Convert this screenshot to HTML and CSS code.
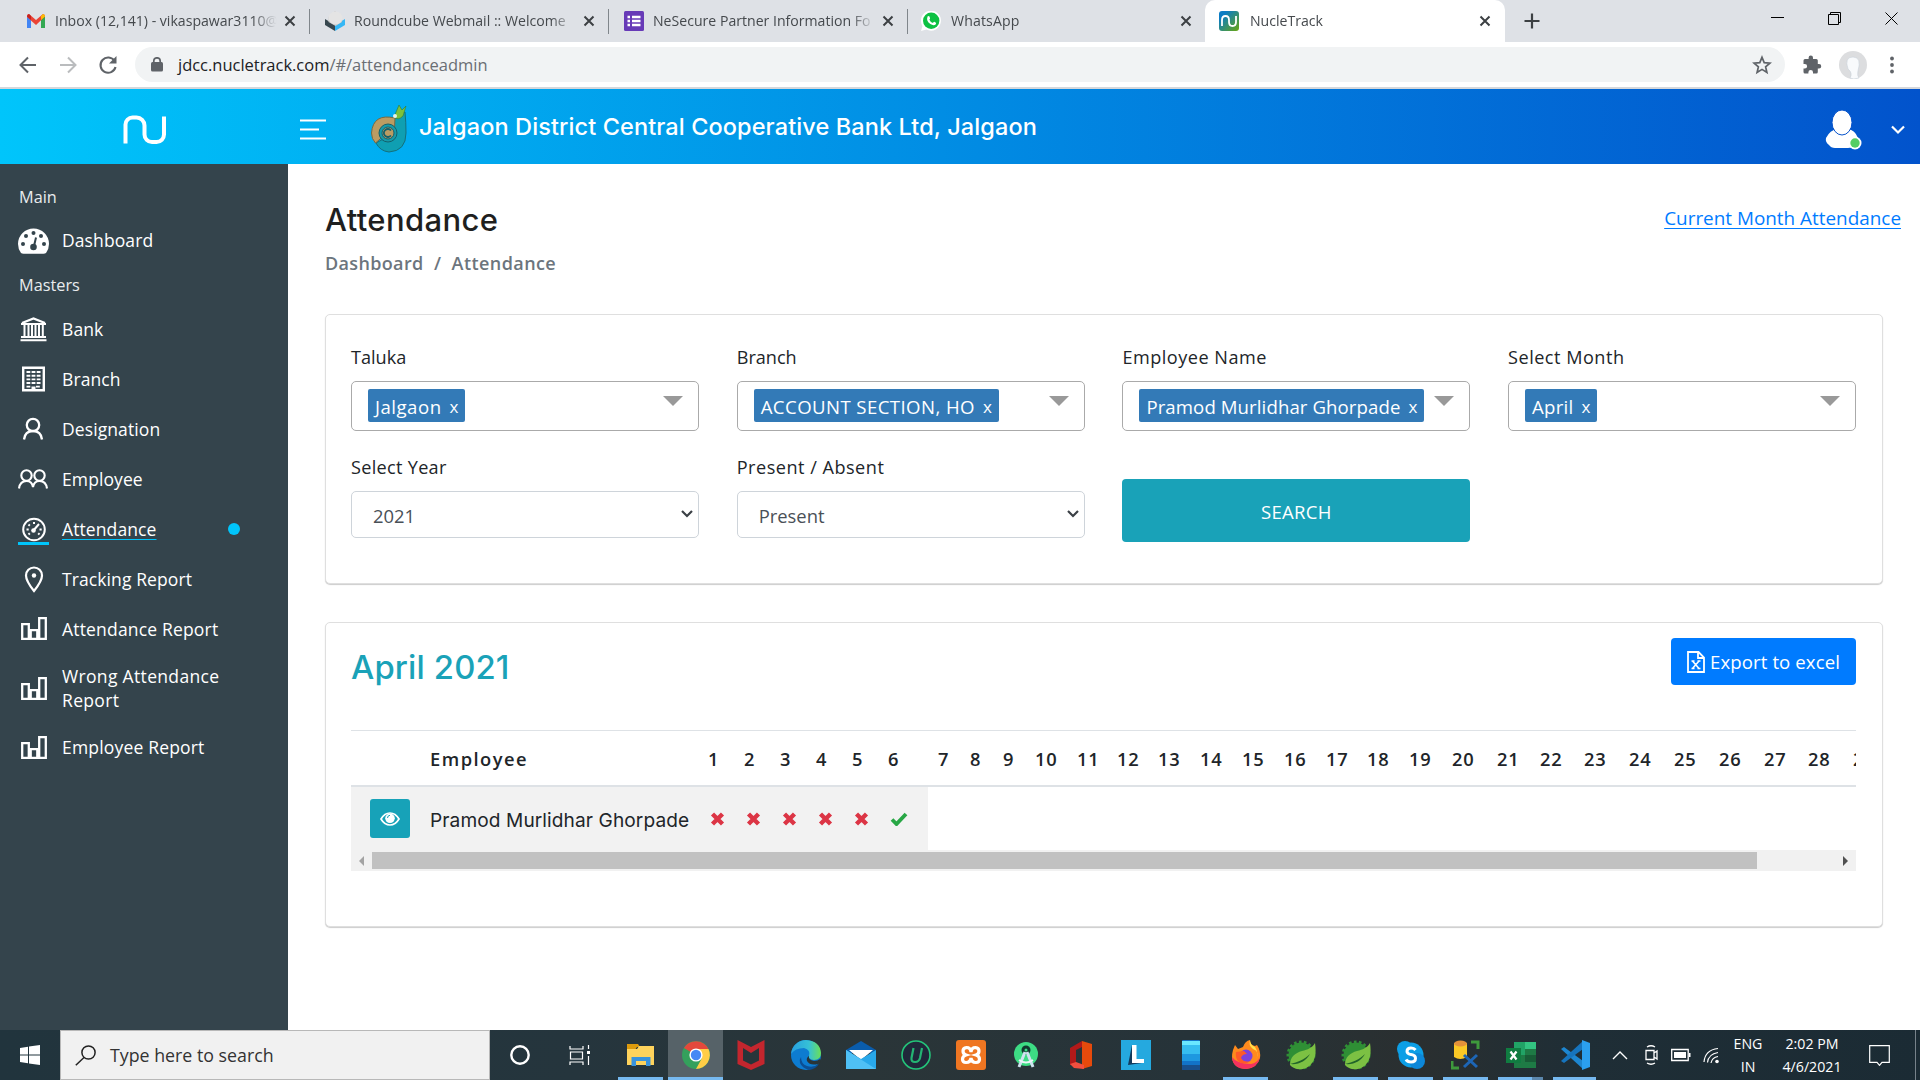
FILE: index.html
```html
<!DOCTYPE html>
<html lang="en">
<head>
<meta charset="utf-8">
<title>NucleTrack</title>
<link rel="stylesheet" href="styles.css">
</head>
<body>
<svg class="defs" width="0" height="0">
  <defs>
    <symbol id="close" viewBox="0 0 12 12"><path d="M1.500 1.500l9 9M10.500 1.500l-9 9" stroke="#3c4043" stroke-width="2" fill="none"/></symbol>
    <symbol id="chart" viewBox="0 0 26 24"><path d="M1.200 7.200h6.600v14.600H1.200zM9.700 13.200h6.600v8.600H9.700zM18.200 1.200h6.600v20.600h-6.600z" fill="none" stroke="#fff" stroke-width="2.300"/></symbol>
    <symbol id="chev" viewBox="0 0 12 8"><path d="M1 1l5 5 5-5" fill="none" stroke="#3b4046" stroke-width="2.200"/></symbol>
    <symbol id="cross" viewBox="0 0 14 14"><path d="M2 2l10 10M12 2L2 12" fill="none" stroke="#dc3545" stroke-width="4.400"/></symbol>
    <symbol id="spring" viewBox="0 0 30 30"><circle cx="15" cy="15" r="12.500" fill="#2f8f35"/><circle cx="15" cy="15" r="13" fill="none" stroke="#2f8f35" stroke-width="3" stroke-dasharray="2.600 2.300"/><path d="M29 3c2 13-1 21-9 25-6 2.500-13 1-16-3 0-8 5-12 12-14 6-1.500 10-3 13-8z" fill="#7cc143"/><path d="M4 24c9 1 16-3 20-10-6 6-12 8-20 10z" fill="#21632a"/></symbol>
  </defs>
</svg>

<div class="tabstrip">
  <div class="tab tab-first">
    <svg class="fav" viewBox="0 0 20 20"><path d="M1 5v12h4V9z" fill="#4285f4"/><path d="M19 5v12h-4V9z" fill="#34a853"/><path d="M1 5.500Q1 3 3 3l7 6 7-6q2 0 2 2.500L10 14 1 6z" fill="#ea4335"/><path d="M15 5l2-2q2 0 2 2.500L15 9z" fill="#fbbc04"/><path d="M1 5.500Q1 3 3 3l2 2v4z" fill="#c5221f"/></svg>
    <span class="tab-title">Inbox (12,141) - vikaspawar3110@</span>
    <svg class="tab-x"><use href="#close"/></svg>
  </div>
  <div class="tab">
    <svg class="fav" viewBox="0 0 20 20"><path d="M0 8l10 6v6L0 14z" fill="#37474f"/><path d="M20 8l-10 6v6l10-6z" fill="#35b7f5"/><path d="M3.500 6L10 0l7 6v5l-6.500 4L3.500 11z" fill="#c9c9c9"/><ellipse cx="10.500" cy="7" rx="7" ry="6.500" fill="#e4e4e4"/></svg>
    <span class="tab-title">Roundcube Webmail :: Welcome</span>
    <svg class="tab-x"><use href="#close"/></svg>
  </div>
  <div class="tab">
    <svg class="fav" viewBox="0 0 20 20"><rect width="20" height="20" rx="1.500" fill="#673ab7"/><path d="M3.500 6h2.500M8 6h8.500M3.500 10h2.500M8 10h8.500M3.500 14h2.500M8 14h8.500" stroke="#fff" stroke-width="2.400"/></svg>
    <span class="tab-title">NeSecure Partner Information Fo</span>
    <svg class="tab-x"><use href="#close"/></svg>
  </div>
  <div class="tab tab-plain">
    <svg class="fav" viewBox="0 0 20 20"><path d="M0 20l1.500-5A10 10 0 1 1 5.500 18.600z" fill="#fff"/><circle cx="10.200" cy="9.800" r="8.200" fill="#0dc143"/><path d="M6.500 5.500q2-1.500 2.500 1.500.3 1-.7 1.500.8 2.500 3.700 3.400.8-1.400 1.800-.9 2.200.8 1 2.200-2 2-5.500-.2-4.300-3-2.800-7.500z" fill="#fff"/></svg>
    <span class="tab-title">WhatsApp</span>
    <svg class="tab-x"><use href="#close"/></svg>
  </div>
  <div class="tab tab-active">
    <svg class="fav" viewBox="0 0 20 20"><defs><linearGradient id="nt" x1="0" y1="0" x2="1" y2="1"><stop offset=".2" stop-color="#0b7cc4"/><stop offset="1" stop-color="#6aa70e"/></linearGradient></defs><rect width="20" height="20" rx="3" fill="url(#nt)"/><path d="M3 15V9q0-4 3.500-4t3.500 4v2q0 4 3.500 4t3.500-4V5" fill="none" stroke="#fff" stroke-width="1.800"/></svg>
    <span class="tab-title">NucleTrack</span>
    <svg class="tab-x"><use href="#close"/></svg>
  </div>
  <svg class="newtab" viewBox="0 0 16 16"><path d="M8 .5v15M.5 8h15" stroke="#3c4043" stroke-width="2.200"/></svg>
  <div class="winctl">
    <svg width="13" height="13"><path d="M0 5.500h13" stroke="#000"/></svg>
    <svg width="13" height="13"><path d="M.5 2.500h10v10H.5zM2.500 2.500v-2h10v10h-2" fill="none" stroke="#000"/></svg>
    <svg width="13" height="13"><path d="M.5.5l12 12M12.500.5l-12 12" stroke="#000"/></svg>
  </div>
</div>

<div class="toolbar">
  <svg class="nav-btn" viewBox="0 0 20 20"><path d="M18 10H3M10 2.500L2.500 10l7.500 7.500" fill="none" stroke="#5f6368" stroke-width="2"/></svg>
  <svg class="nav-btn" viewBox="0 0 20 20"><path d="M2 10h15M10 2.500l7.500 7.500-7.500 7.500" fill="none" stroke="#babcbe" stroke-width="2"/></svg>
  <svg class="nav-btn" viewBox="0 0 20 20"><path d="M16.500 6A7.600 7.600 0 1 0 17.500 12" fill="none" stroke="#5f6368" stroke-width="2.100"/><path d="M18.500 1v7.500H11z" fill="#5f6368"/></svg>
  <div class="omnibox">
    <svg class="lock" viewBox="0 0 12 15"><rect y="5" width="12" height="9.500" rx="1.500" fill="#5f6368"/><path d="M2.800 6V4a3.200 3.200 0 0 1 6.400 0v2" fill="none" stroke="#5f6368" stroke-width="1.700"/></svg>
    <span class="url">jdcc.nucletrack.com<span class="path">/#/attendanceadmin</span></span>
    <svg class="star" viewBox="0 0 20 20"><path d="M10 2.300l2.200 5.300 5.700.5-4.300 3.700 1.300 5.600-4.900-3-4.900 3 1.300-5.600L2.100 8.100l5.700-.5z" fill="none" stroke="#5f6368" stroke-width="1.700"/></svg>
  </div>
  <svg class="puzzle" viewBox="0 0 20 20"><path d="M17 9h-1.200V5.500q0-1.500-1.500-1.500H11V2.800a2.200 2.200 0 0 0-4.400 0V4H3Q1.500 4 1.500 5.500v3.400h1.300a2.300 2.300 0 0 1 0 4.600H1.500V17Q1.500 18.500 3 18.500h3.400v-1.300a2.300 2.300 0 0 1 4.600 0v1.300h3.300q1.500 0 1.500-1.500v-3.500H17A2.200 2.200 0 0 0 17 9z" fill="#5f6368"/></svg>
  <svg class="avatar" viewBox="0 0 28 28"><circle cx="14" cy="14" r="14" fill="#dcdddf"/><path d="M9 18Q5 6 14 6t5 14q-1 5 1 7-6 2-9 0 3-5-2-9z" fill="#f8fafc" stroke="#c7d0d8" stroke-width=".6"/></svg>
  <svg class="dots" viewBox="0 0 4 18"><g fill="#5f6368"><circle cx="2" cy="2.500" r="1.900"/><circle cx="2" cy="9" r="1.900"/><circle cx="2" cy="15.500" r="1.900"/></g></svg>
</div>

<header class="topbar">
  <div class="brand"><svg width="44" height="30" viewBox="0 0 44 30"><path d="M2.500 28.500V9.500a7 7 0 0 1 7-7h4a8 8 0 0 1 8 8v9a7.500 7.500 0 0 0 7.500 7.500h4.500a7.500 7.500 0 0 0 7.500-7.500V1.500" fill="none" stroke="#fff" stroke-width="4"/></svg></div>
  <svg class="burger" viewBox="0 0 26 21"><path d="M0 1.500h26M0 10.500h19M0 19.500h26" stroke="#fff" stroke-width="2.200"/></svg>
  <svg class="bank-logo" viewBox="0 0 38 48"><path d="M26 9l9-2q1 10 1 21 0 18-17 19-9-1-13-9l11-6z" fill="#0f9fb2" stroke="#14707c"/><path d="M25 13Q3 8 1.500 28q0 6 4 10l8-7q-1-7 5-9l6 1z" fill="#bb9c63" stroke="#7b693f"/><circle cx="18" cy="28" r="9" fill="#169aa9" stroke="#14606b"/><circle cx="18" cy="28" r="6" fill="#bb9c63" stroke="#14606b"/><path d="M21 25.500a4 4 0 1 0 0 5" fill="none" stroke="#14606b" stroke-width="1.800"/><path d="M24 12l5-12 3 5 4-4-3 10q-5 5-9 1z" fill="#7cc13c" stroke="#317a35" stroke-width=".6"/><circle cx="25" cy="11" r="2" fill="#e8f4ea"/></svg>
  <h1 class="bank-name">Jalgaon District Central Cooperative Bank Ltd, Jalgaon</h1>
  <svg class="user" viewBox="0 0 38 40"><path d="M1 28Q5 20 12 19h11q7 1 10 9 1 5-4 8-2 2-6 2H10q-4 0-6-3-4-3-3-7z" fill="#fff"/><ellipse cx="17" cy="12.500" rx="10" ry="12.500" fill="#fff" stroke="#0753cb"/><circle cx="30" cy="33" r="6.500" fill="#fff"/><circle cx="30" cy="33" r="4.700" fill="#55ce63"/></svg>
  <svg class="user-chev" viewBox="0 0 14 10"><path d="M1 1.500l6 6 6-6" fill="none" stroke="#fff" stroke-width="2.200"/></svg>
</header>

<div class="shell">
  <nav class="sidebar">
    <div class="side-head">Main</div>
    <a class="side-item side-up"><svg class="side-ico" viewBox="0 0 31 28"><path d="M3 26Q0 22 0 17a15.500 15.500 0 0 1 31 0q0 5-3 9-1 .8-2.500.800h-20Q4 26.800 3 26z" fill="#fff"/><g fill="#34444c"><circle cx="5" cy="17" r="2"/><circle cx="8" cy="9" r="2"/><circle cx="15.500" cy="6" r="2"/><circle cx="23" cy="9" r="2"/><circle cx="26" cy="17" r="2"/><circle cx="15.500" cy="20" r="3.300"/></g><path d="M16 19l2-8.500" stroke="#34444c" stroke-width="2"/></svg><span class="side-text">Dashboard</span></a>
    <div class="side-head">Masters</div>
    <a class="side-item"><svg class="side-ico" viewBox="0 0 31 28"><path d="M4 8l11.500-4.500L27 8" fill="none" stroke="#fff" stroke-width="2.300"/><path d="M3 9h25M3 22h25M2.500 25.300h26" stroke="#fff" stroke-width="2"/><path d="M6.500 10v12M10.500 10v12M14 10v12M17.500 10v12M21 10v12M24.800 10v12" stroke="#fff" stroke-width="2"/></svg><span class="side-text">Bank</span></a>
    <a class="side-item"><svg class="side-ico" viewBox="0 0 31 28"><path d="M5.200 2.700h20.600v22.600H5.200z" fill="none" stroke="#fff" stroke-width="2.400"/><path d="M8.500 7h14M8.500 10.700h14M8.500 14.400h14M8.500 18h14M8.500 21.600h4.500M18 21.600h4.500" stroke="#fff" stroke-width="1.900" stroke-dasharray="3.800 1.300"/><path d="M13.500 21.500h4v4h-4z" fill="#fff"/></svg><span class="side-text">Branch</span></a>
    <a class="side-item"><svg class="side-ico" viewBox="0 0 31 28"><g fill="none" stroke="#fff" stroke-width="2.300"><circle cx="15" cy="10" r="6.200"/><path d="M6 24.500q1-8.500 9-8.500t9 8.500"/></g></svg><span class="side-text">Designation</span></a>
    <a class="side-item"><svg class="side-ico" viewBox="0 0 31 28"><g fill="none" stroke="#fff" stroke-width="2.100"><circle cx="8.500" cy="10.500" r="5.200"/><circle cx="21.500" cy="10.500" r="5.200"/><path d="M1 23.500q1-7.500 7.500-7.500 5.500 0 6.500 6 1-6 6.500-6 6.500 0 7.500 7.500"/></g></svg><span class="side-text">Employee</span></a>
    <a class="side-item side-current"><svg class="side-ico" viewBox="0 0 31 28"><circle cx="16" cy="12.500" r="10.800" fill="none" stroke="#fff" stroke-width="2"/><path d="M8.500 12.500h2.200M21.500 12.500h2.200M16 5v2M10.500 7.500l1.300 1.300M10.500 17.500l1.300-1.300M21.500 17.500l-1.300-1.300" stroke="#fff" stroke-width="2"/><path d="M15 14l6-7" stroke="#fff" stroke-width="2"/><circle cx="15.500" cy="13.500" r="2.300" fill="#fff"/><path d="M0 26.500h31" stroke="#00c5fb" stroke-width="3"/></svg><span class="side-text cur-text">Attendance</span><i class="dot"></i></a>
    <a class="side-item"><svg class="side-ico" viewBox="0 0 31 28"><path d="M16 26Q8 16 8 10.500a8 8 0 0 1 16 0Q24 16 16 26z" fill="none" stroke="#fff" stroke-width="2.200"/><circle cx="16" cy="10.500" r="2.200" fill="#fff"/></svg><span class="side-text">Tracking Report</span></a>
    <a class="side-item"><svg class="side-ico side-chart" viewBox="0 0 26 24"><use href="#chart"/></svg><span class="side-text side-wide">Attendance Report</span></a>
    <a class="side-item side-tall side-up"><svg class="side-ico side-chart" viewBox="0 0 26 24"><use href="#chart"/></svg><span class="side-text side-wide">Wrong Attendance<br>Report</span></a>
    <a class="side-item side-up"><svg class="side-ico side-chart" viewBox="0 0 26 24"><use href="#chart"/></svg><span class="side-text side-wide">Employee Report</span></a>
  </nav>

  <main class="content">
    <div class="page-head">
      <div>
        <h2 class="page-title">Attendance</h2>
        <div class="crumbs"><span>Dashboard</span><span class="slash">/</span><span>Attendance</span></div>
      </div>
      <a class="month-link">Current Month Attendance</a>
    </div>

    <section class="card filters">
      <div class="field">
        <label>Taluka</label>
        <div class="multi"><span class="tag tag-short"><span>Jalgaon</span><b>x</b></span><i class="tri"></i></div>
      </div>
      <div class="field">
        <label>Branch</label>
        <div class="multi"><span class="tag"><span class="caps">ACCOUNT SECTION, HO</span><b>x</b></span><i class="tri"></i></div>
      </div>
      <div class="field">
        <label class="label-wide">Employee Name</label>
        <div class="multi"><span class="tag tag-long"><span>Pramod Murlidhar Ghorpade</span><b>x</b></span><i class="tri"></i></div>
      </div>
      <div class="field">
        <label class="label-wide">Select Month</label>
        <div class="multi"><span class="tag"><span>April</span><b>x</b></span><i class="tri"></i></div>
      </div>
      <div class="field">
        <label class="label-year">Select Year</label>
        <div class="select"><span>2021</span><svg><use href="#chev"/></svg></div>
      </div>
      <div class="field">
        <label class="label-wide">Present / Absent</label>
        <div class="select"><span>Present</span><svg><use href="#chev"/></svg></div>
      </div>
      <button class="search">SEARCH</button>
    </section>

    <section class="card report">
      <div class="report-head">
        <h3 class="report-title">April 2021</h3>
        <button class="export"><svg viewBox="0 0 18 22"><path d="M1 1h10.500l5.500 5.500V21H1zM11 1v6h6" fill="none" stroke="#fff" stroke-width="1.800"/><path d="M5.500 10l6.500 7.500M12 10l-6.500 7.500M4.500 10h3M10.500 10h3M4.500 17.500h3M10.500 17.500h3" stroke="#fff" stroke-width="1.600"/></svg><span>Export to excel</span></button>
      </div>
      <div class="scroller">
        <table class="grid">
          <colgroup><col style="width:79px"><col style="width:278px"><col style="width:36px"><col style="width:36px"><col style="width:36px"><col style="width:36px"><col style="width:36px"><col style="width:40px"><col style="width:42px"><col style="width:33px"><col style="width:32px"><col style="width:42px"><col style="width:40px"><col style="width:41px"><col style="width:42px"><col style="width:42px"><col style="width:42px"><col style="width:42px"><col style="width:41px"><col style="width:42px"><col style="width:43px"><col style="width:45px"><col style="width:43px"><col style="width:44px"><col style="width:45px"><col style="width:45px"><col style="width:45px"><col style="width:45px"><col style="width:44px"><col style="width:45px"><col style="width:45px"></colgroup>
          <thead><tr><th></th><th class="th-emp">Employee</th><th>1</th><th>2</th><th>3</th><th>4</th><th>5</th><th>6</th><th class="th-next">7</th><th>8</th><th>9</th><th>10</th><th>11</th><th>12</th><th>13</th><th>14</th><th>15</th><th>16</th><th>17</th><th>18</th><th>19</th><th>20</th><th>21</th><th>22</th><th>23</th><th>24</th><th>25</th><th>26</th><th>27</th><th>28</th><th>29</th></tr></thead>
          <tbody><tr>
            <td class="td-eye"><span class="eye"><svg viewBox="0 0 20 14"><path d="M1 7q3.500-6 9-6t9 6q-3.500 6-9 6T1 7z" fill="none" stroke="#fff" stroke-width="1.700"/><circle cx="10" cy="6.300" r="4.800" fill="#fff"/><path d="M7.500 6q0-2.500 2.500-2.700" stroke="#17a2b8" fill="none"/></svg></span></td>
            <td class="td-name">Pramod Murlidhar Ghorpade</td>
            <td><svg class="mark"><use href="#cross"/></svg></td><td><svg class="mark"><use href="#cross"/></svg></td><td><svg class="mark"><use href="#cross"/></svg></td><td><svg class="mark"><use href="#cross"/></svg></td><td><svg class="mark"><use href="#cross"/></svg></td>
            <td><svg class="check" viewBox="0 0 18 14"><path d="M2 7.500l4.500 4.500L16 2" fill="none" stroke="#28a745" stroke-width="3.800"/></svg></td>
          </tr></tbody>
        </table>
        <div class="hbar"><i class="arrow-l"></i><div class="thumb"></div><i class="arrow-r"></i></div>
      </div>
    </section>
  </main>
</div>

<footer class="taskbar">
  <div class="start"><svg width="20" height="20"><path d="M0 3l8-1.200V9.500H0zM9 1.600L20 0v9.500H9zM0 10.500h8v7.700L0 17zM9 10.500h11V20L9 18.400z" fill="#fff"/></svg></div>
  <div class="winsearch"><svg width="21" height="21"><g fill="none" stroke="#222" stroke-width="1.500"><circle cx="13.500" cy="7.500" r="6.600"/><path d="M9 12.500L.8 20.300"/></g></svg><span>Type here to search</span></div>
  <div class="sys"><svg width="22" height="22"><circle cx="11" cy="11" r="8.700" fill="none" stroke="#fff" stroke-width="2.400"/></svg></div>
  <div class="sys"><svg width="22" height="20"><path d="M1 1v3h13V1M1.500 7h12v7h-12zM1 20v-3h13v3M19.500 0v4M19.500 11v9" fill="none" stroke="#fff" stroke-width="1.200"/><path d="M18 6h3v3h-3z" fill="#fff"/></svg></div>
  <div class="apps">
    <div class="app run"><svg viewBox="0 0 30 30"><path d="M1 4h11l2 3h-3l-2 3H1z" fill="#dc9a0c"/><path d="M1 9h10l2-3h15v19H1z" fill="#ffd35c"/><path d="M5.500 26v-9h19v9h-4.500v-5h-10v5z" fill="#3a93dc"/></svg></div>
    <div class="app run on"><svg viewBox="0 0 30 30"><circle cx="15" cy="15" r="14" fill="#34a05c"/><path d="M15 15L2.900 8A14 14 0 0 1 27.500 9H15z" fill="#e3483c"/><path d="M15 29a14 14 0 0 0 12.500-20H15l6 9z" fill="#ffcd46"/><circle cx="15" cy="15" r="6.600" fill="#fff"/><circle cx="15" cy="15" r="5.200" fill="#4688f4"/></svg></div>
    <div class="app"><svg viewBox="0 0 30 30"><path d="M1.500 0L15 7 28.500 0v24L15 30 1.500 24zM7 8v12.500l8 4 8-4V8l-8 5z" fill="#c4262e" fill-rule="evenodd"/></svg></div>
    <div class="app"><svg viewBox="0 0 30 30"><defs><linearGradient id="eg"><stop offset="0" stop-color="#279fe0"/><stop offset=".6" stop-color="#36c1d6"/><stop offset="1" stop-color="#6be056"/></linearGradient></defs><circle cx="15" cy="15" r="15" fill="#0d7cd1"/><path d="M0 14C1 5 8 0 15 0q14 1 15 13 0 7-7 7-6-1-5-4 2-6-5-8Q4 8 0 14z" fill="url(#eg)"/><path d="M10 17q0 7 6 9t12-2q-3 5-10 6-7-2-9-7-1-3 1-6z" fill="#0c4f94"/><path d="M18 16q-1 4 5 5 4 0 6-2l1 3-3 2q-8 2-11-3-1-3 2-5z" fill="#2a3538"/></svg></div>
    <div class="app"><svg viewBox="0 0 30 30"><path d="M0 10L15 1l15 9v3H0z" fill="#0a5cab"/><path d="M3 10h24L15 20z" fill="#fff"/><path d="M0 10l15 9 15-9v19H0z" fill="#28a8ea"/><path d="M0 10l30 19H0z" fill="#4fc0f5"/></svg></div>
    <div class="app"><svg viewBox="0 0 30 30"><circle cx="15" cy="15" r="14" fill="#20283a" stroke="#24c47a" stroke-width="1.600"/><path d="M12.500 8l-2 10q-.5 4 3.500 4t5-4l2-10" fill="none" stroke="#24b573" stroke-width="2.200"/></svg></div>
    <div class="app"><svg viewBox="0 0 30 30"><rect width="30" height="30" rx="3" fill="#ef7622"/><path d="M15 12q-.5-4.500-4.500-4.500Q7 8 7 11t3 4q-3.500 1-3.500 4.300 0 3.200 3.500 3.200 4.500 0 5-4.500.5 4.500 5 4.500 3.500 0 3.500-3.200Q23.500 16 20 15q3-1 3-4t-3.500-3.500Q15.500 7.500 15 12z" fill="none" stroke="#fff" stroke-width="3.200"/></svg></div>
    <div class="app"><svg viewBox="0 0 30 30"><circle cx="15" cy="14" r="12" fill="#3ddc84"/><circle cx="15" cy="10" r="4.500" fill="#12382f"/><path d="M14 12L8 27M16 12l6 15" stroke="#cfe3ef" stroke-width="3"/><path d="M8 20q7 5 14 0" fill="none" stroke="#eef5f9" stroke-width="2"/><circle cx="15" cy="10" r="1.500" fill="#3ddc84"/></svg></div>
    <div class="app"><svg viewBox="0 0 30 30"><path d="M4 8L16 1v6l-6 3v13l-6 2z" fill="#b31919"/><path d="M16 1l10 3v22l-10 3V1z" fill="#e64a0c"/><path d="M4 24l6-2 8 3v4L8 28z" fill="#f14f3f"/></svg></div>
    <div class="app"><svg viewBox="0 0 30 30"><path d="M0 0h30v30H0z" fill="#25a9df"/><path d="M7 25l4-20v14l10 4z" fill="#123a5c"/><path d="M11 5h4.500v14H23v4H11z" fill="#fff"/></svg></div>
    <div class="app"><svg viewBox="0 0 30 30"><path d="M6 1q0-1 1-1h16q1 0 1 1v28q0 1-1 1H7q-1 0-1-1z" fill="#1273c8"/><path d="M6 1h18v4H6z" fill="#6ae7ff"/><path d="M6 5h18v9H6z" fill="#36bdf0"/><path d="M6 14h18v7H6z" fill="#1e98e0"/><path d="M6 25h18v5H6z" fill="#184f8c"/></svg></div>
    <div class="app run"><svg viewBox="0 0 30 30"><path d="M2 10l2-5 3 4 5-2q2-6 7-7 0 5 5 6l2-1q4 6 3 13-3 10-14 11Q2 28 1 18q0-5 1-8z" fill="#ff8a1d"/><path d="M1 17q1 12 14 12 12-1 14-12-3 6-9 7Q6 24 1 17z" fill="#f4325e"/><circle cx="15" cy="16" r="6.500" fill="#7a42dd"/><path d="M5 12l8-1 3 3q-5 0-6 4 3 5 9 3-6 5-12 0-3-4-2-9z" fill="#ff5a28"/><path d="M19 0q0 5 5 7 4 6 1 13 4-9-3-11-5-4-3-9z" fill="#ffe04a"/></svg></div>
    <div class="app"><svg><use href="#spring"/></svg></div>
    <div class="app run"><svg><use href="#spring"/></svg></div>
    <div class="app run"><svg viewBox="0 0 30 30"><circle cx="15" cy="15" r="12.500" fill="#0d9fe6"/><circle cx="9" cy="9" r="8" fill="#0d9fe6"/><circle cx="21" cy="21" r="8" fill="#0d87d8"/><path d="M19.500 10Q18 8 15 8q-4 0-4 3.200 0 2.500 4 3.400 4.500.8 4.500 3.700 0 3.700-4.500 3.700-3.500 0-5-2.500" fill="none" stroke="#fff" stroke-width="3"/></svg></div>
    <div class="app run"><svg viewBox="0 0 30 30"><path d="M3 3v14q6 4 13 0V3z" fill="#fbc926"/><ellipse cx="9.500" cy="3.500" rx="6.500" ry="3" fill="#e5923a"/><path d="M20 2h7v7M1 21v7h7" fill="none" stroke="#3e9a3c" stroke-width="3"/><path d="M13 15l13 12M26 15L13 27" stroke="#1d66b6" stroke-width="3"/></svg></div>
    <div class="app run stack"><svg viewBox="0 0 30 30"><path d="M8 2h22v26H8z" fill="#1e7a45"/><path d="M8 2h11v13H8z" fill="#21a366"/><path d="M19 2h11v7H19z" fill="#33c481"/><path d="M19 15h11v7H19z" fill="#185c37"/><path d="M0 8h15v15H0z" fill="#107c41"/><path d="M4.500 11.500l6 8M10.500 11.500l-6 8" stroke="#fff" stroke-width="2.200"/></svg></div>
    <div class="app run last"><svg viewBox="0 0 30 30"><path d="M1 9l3-2 19 14v8z" fill="#1d86d0"/><path d="M1 21l3 2L23 9V1z" fill="#1674bd"/><path d="M22 0l8 3v24l-8 3z" fill="#2ba0f0"/></svg></div>
  </div>
  <div class="tray">
    <svg width="16" height="10"><path d="M1 9l7-7 7 7" fill="none" stroke="#fff" stroke-width="1.400"/></svg>
    <svg class="cam" width="16" height="20"><path d="M2 5.500h8v9H2zM10 8l3-2v8l-3-2M3 2q4-2.500 8 0M3 18q4 2.500 8 0" fill="none" stroke="#fff" stroke-width="1.300"/></svg>
    <svg class="batt" width="20" height="14"><path d="M.7 1.500h16.500v11H.7z" fill="none" stroke="#fff" stroke-width="1.300"/><path d="M3 4h12v6H3zM18 5h1.500v4H18z" fill="#fff"/></svg>
    <svg class="wifi" width="17" height="17"><path d="M1 15Q2 3 15 1.500M4.500 15.500Q5.500 7 15 5.500M8 16q1-5.500 7-6.500" fill="none" stroke="#fff" stroke-width="1.200"/><circle cx="14" cy="14.500" r="1.800" fill="#fff"/></svg>
    <div class="lang"><span>ENG</span><span>IN</span></div>
    <div class="clock"><span>2:02 PM</span><span>4/6/2021</span></div>
    <svg class="note" width="21" height="21"><path d="M.7.7h19.600v16.600h-7.300l-2.500 3-2.500-3H.7z" fill="none" stroke="#fff" stroke-width="1.200"/></svg>
  </div>
</footer>
</body>
</html>
```
FILE: styles.css
```css
* { box-sizing: border-box; }
html, body { margin: 0; height: 100%; }
body {
  width: 1920px;
  height: 1080px;
  overflow: hidden;
  display: flex;
  flex-direction: column;
  font-family: "Open Sans", "Noto Sans", sans-serif;
  color: #212529;
  background: #fff;
}
svg { display: block; flex: none; }
span, h1, h2, h3, label, td, th, a { white-space: nowrap; }
h1, h2, h3 { margin: 0; font-weight: 550; font-family: Inter, "Open Sans", sans-serif; }
button { border: 0; padding: 0; font: inherit; }
.defs { position: absolute; }

/* browser tabs */
.tabstrip { display: flex; flex: none; height: 42px; background: #dee1e6; }
.tab {
  position: relative;
  display: flex;
  align-items: center;
  width: 299px;
  height: 42px;
  padding: 0 14px 8px 15px;
}
.tab-first { width: 310px; padding-left: 26px; }
.tab::after { content: ""; position: absolute; right: 0; top: 9px; width: 1px; height: 25px; background: #80868b; }
.tab-plain { width: 297px; padding: 0 13px 8px 13px; }
.tab-plain::after, .tab-active::after { display: none; }
.tab-active { width: 300px; padding-left: 14px; background: #fff; border-radius: 10px 10px 0 0; }
.fav { width: 20px; height: 20px; margin-top: 8px; }
.tab-title {
  flex: 1;
  min-width: 0;
  margin: 8px 5px 0 9px;
  overflow: hidden;
  font-size: 14.100px;
  line-height: 22px;
  color: #45494d;
  -webkit-mask-image: linear-gradient(90deg, #000 88%, transparent 99%);
  mask-image: linear-gradient(90deg, #000 88%, transparent 99%);
}
.tab-plain .tab-title { margin-left: 10px; letter-spacing: .15px; }
.tab-active .tab-title { margin-left: 11px; }
.tab-x { width: 12px; height: 12px; margin-top: 8px; }
.newtab { width: 16px; height: 16px; margin: 13px 0 0 19px; }
.winctl { display: flex; margin-left: auto; padding: 12px 22px 0 0; gap: 44px; }

/* address bar */
.toolbar {
  display: flex;
  flex: none;
  align-items: center;
  height: 47px;
  padding: 0 20px 0 18px;
  border-bottom: 2px solid #d5d7db;
}
.nav-btn { width: 20px; height: 20px; margin-right: 20px; }
.nav-btn:nth-child(3) { margin-right: 17px; }
.omnibox { display: flex; flex: none; align-items: center; width: 1650px; height: 35px; padding: 0 13px 0 16px; border-radius: 18px; background: #f1f3f4; }
.lock { width: 12px; height: 15px; margin-right: 15px; }
.url { font-size: 16.500px; line-height: 24px; color: #202124; letter-spacing: -.02px; }
.url .path { color: #6a6e73; }
.star { width: 20px; height: 20px; margin-left: auto; }
.puzzle { width: 20px; height: 20px; margin: 0 17px; }
.avatar { width: 28px; height: 28px; }
.dots { width: 4px; height: 18px; margin-left: 23px; }

/* application header */
.topbar {
  display: flex;
  flex: none;
  align-items: center;
  height: 75px;
  padding: 6px 15px 0 0;
  background: linear-gradient(90deg, #00c5fb 0%, #0253cc 100%);
}
.brand { width: 300px; padding-left: 123px; }
.burger { width: 26px; height: 21px; }
.bank-logo { width: 38px; height: 48px; margin: -2px 0 0 44px; }
.bank-name { margin: -6px 0 0 11px; font-size: 23.500px; line-height: 30px; color: #fff; letter-spacing: .1px; }
.user { width: 38px; height: 40px; margin-left: auto; }
.user-chev { width: 14px; height: 10px; margin-left: 28px; }

/* navigation */
.shell { display: flex; flex: none; height: 866px; }
.sidebar { flex: none; width: 288px; padding-top: 14px; background: #34444c; font-size: 17.500px; color: #fff; }
.side-head { height: 38px; padding-left: 19px; font-size: 16.300px; line-height: 38px; color: #e9ecee; }
.side-item { display: flex; align-items: center; height: 50px; padding: 0 48px 0 18px; line-height: 24.500px; }
.side-text { letter-spacing: .1px; }
.side-up .side-text { margin-top: -1px; }
.side-wide { letter-spacing: .18px; }
.side-tall .side-text { letter-spacing: .33px; }
.side-ico { width: 31px; height: 28px; margin-right: 13px; }
.side-chart { width: 26px; height: 24px; margin: 0 15px 0 3px; }
.side-tall { height: 69px; }
.side-current .side-ico { margin-top: 4px; }
.cur-text { text-decoration: underline; text-decoration-color: #00c5fb; text-underline-offset: 3px; }
.dot { width: 12px; height: 12px; margin-left: auto; border-radius: 50%; background: #00c5fb; }

/* page */
.content { flex: 1; padding: 36px 37px 0; }
.page-head { display: flex; justify-content: space-between; height: 114px; margin-right: -18px; }
.page-title { font-size: 31px; line-height: 40px; color: #1f1f1f; letter-spacing: .38px; }
.crumbs { display: flex; margin-top: 10px; font-size: 18px; font-weight: 600; line-height: 26px; color: #6c757d; letter-spacing: .35px; }
.crumbs span:last-child { letter-spacing: .42px; }
.slash { width: 28px; text-align: center; }
.month-link { margin-top: 4px; font-size: 18.900px; line-height: 28px; color: #007bff; text-decoration: underline; text-underline-offset: 3px; }

.card { border: 1px solid #dfdfdf; border-radius: 5px; background: #fff; box-shadow: 0 1px 1px rgba(0, 0, 0, .2); }
.filters {
  display: grid;
  grid-template-columns: repeat(4, 348px);
  grid-template-rows: 110px 80px;
  column-gap: 37.700px;
  height: 270px;
  padding: 28px 25px 0;
}
.field label { display: block; height: 38px; font-size: 18.100px; line-height: 28px; }
.field .label-wide { letter-spacing: .5px; }
.field .label-year { letter-spacing: .3px; }
.multi { display: flex; align-items: flex-start; justify-content: space-between; height: 50px; padding: 7px 15px 0 16px; border: 1px solid #aaa; border-radius: 5px; }
.tag { display: flex; height: 33px; padding: 0 7px; border-radius: 2px; background: #337ab7; color: #fff; font-size: 18.600px; line-height: 36px; letter-spacing: .25px; }
.tag-short { letter-spacing: .5px; }
.tag-long { letter-spacing: .1px; }
.caps { letter-spacing: .42px; }
.tag b { margin-left: 8px; font-weight: 500; font-size: 17px; letter-spacing: 0; }
.tri { margin-top: 7px; border: 10px solid transparent; border-top-color: #999; border-bottom: 0; }
.select { display: flex; align-items: center; justify-content: space-between; height: 47px; padding: 2px 5px 0 21px; border: 1px solid #ced4da; border-radius: 5px; font-size: 18.400px; color: #495057; }
.select svg { width: 12px; height: 8px; margin-top: -4px; }
.search { align-self: start; height: 63px; margin-top: 26px; padding-top: 1px; border-radius: 4px; background: #19a2b8; color: #fff; font-size: 18.500px; letter-spacing: .35px; }

.report { height: 305px; margin-top: 38px; padding: 15px 26px 0 25px; }
.report-head { display: flex; justify-content: space-between; height: 92px; }
.report-title { margin-top: 9px; font-size: 32.800px; line-height: 40px; color: #1aa2b8; letter-spacing: .15px; }
.export { display: flex; align-items: center; width: 185px; height: 47px; padding-left: 16px; border-radius: 4px; background: #007bff; color: #fff; font-size: 18.600px; letter-spacing: .1px; }
.export svg { width: 18px; height: 22px; margin-right: 5px; }
.scroller { width: 1505px; overflow: hidden; }
.grid { width: 1547px; table-layout: fixed; border-collapse: separate; border-spacing: 0; }
.grid th, .grid td { padding: 0; text-align: left; }
.grid th { height: 57px; border-top: 1px solid #dee2e6; border-bottom: 2px solid #dee2e6; font-size: 18.300px; font-weight: 550; letter-spacing: .7px; }
.grid .th-emp { letter-spacing: 1.500px; }
.grid .th-next { padding-left: 10px; }
.grid td { height: 63px; background: #f2f2f2; vertical-align: middle; }
.grid .td-eye { padding-left: 19px; }
.eye { display: flex; align-items: center; justify-content: center; width: 40px; height: 39px; border-radius: 3px; background: #17a2b8; }
.eye svg { width: 20px; height: 14px; }
.grid .td-name { padding-top: 2px; font-family: Inter, sans-serif; font-size: 19.100px; letter-spacing: .1px; }
.mark { width: 15px; height: 14px; margin-left: 2px; }
.check { width: 18px; height: 14px; margin-left: 2px; }
.hbar { display: flex; align-items: center; justify-content: space-between; height: 21px; padding: 0 8px 0 8px; background: #f1f1f1; }
.arrow-l { border: 5px solid transparent; border-right-color: #a3a3a3; border-left: 0; }
.thumb { width: 1385px; height: 17px; margin: 0 auto 0 8px; background: #c1c1c1; }
.arrow-r { border: 5px solid transparent; border-left-color: #505050; border-right: 0; }

/* desktop taskbar */
.taskbar { display: flex; flex: none; height: 50px; background: linear-gradient(90deg, #21343d 0%, #25353d 30%, #2a3538 45%, #263339 62%, #2a2f30 74%, #1f2e36 82%, #1b2b34 100%); color: #fff; }
.start { width: 60px; padding: 15px 0 0 20px; }
.winsearch { display: flex; align-items: center; width: 430px; padding-left: 14px; border: 1px solid #b8b8b8; background: #f1f1f1; color: #333; font-size: 17.800px; }
.winsearch svg { margin-right: 14px; }
.sys { display: flex; align-items: center; justify-content: center; width: 60px; }
.apps { display: flex; margin-left: 3px; }
.app { position: relative; display: flex; align-items: center; justify-content: center; width: 55px; height: 50px; }
.last { width: 53px; }
.app svg { width: 30px; height: 30px; }
.on { background: #566268; }
.run::after { content: ""; position: absolute; left: 5px; right: 5px; bottom: 0; height: 3px; background: #76b9f0; }
.on::after { left: 0; right: 0; }
.stack::after { background: linear-gradient(90deg, #76b9f0 75%, #5b87ac 75%); }
.tray { display: flex; align-items: center; margin-left: 11px; font-size: 14.200px; }
.cam { margin-left: 16px; }
.batt { margin-left: 11px; }
.wifi { margin-left: 12px; }
.lang, .clock { display: flex; flex-direction: column; align-items: center; line-height: 23px; }
.lang { width: 30px; margin-left: 13px; }
.clock { width: 64px; margin-left: 17px; }
.note { margin-left: 25px; }
.tray::after { content: ""; width: 1px; height: 50px; margin-left: 25px; background: #77828a; }
```
